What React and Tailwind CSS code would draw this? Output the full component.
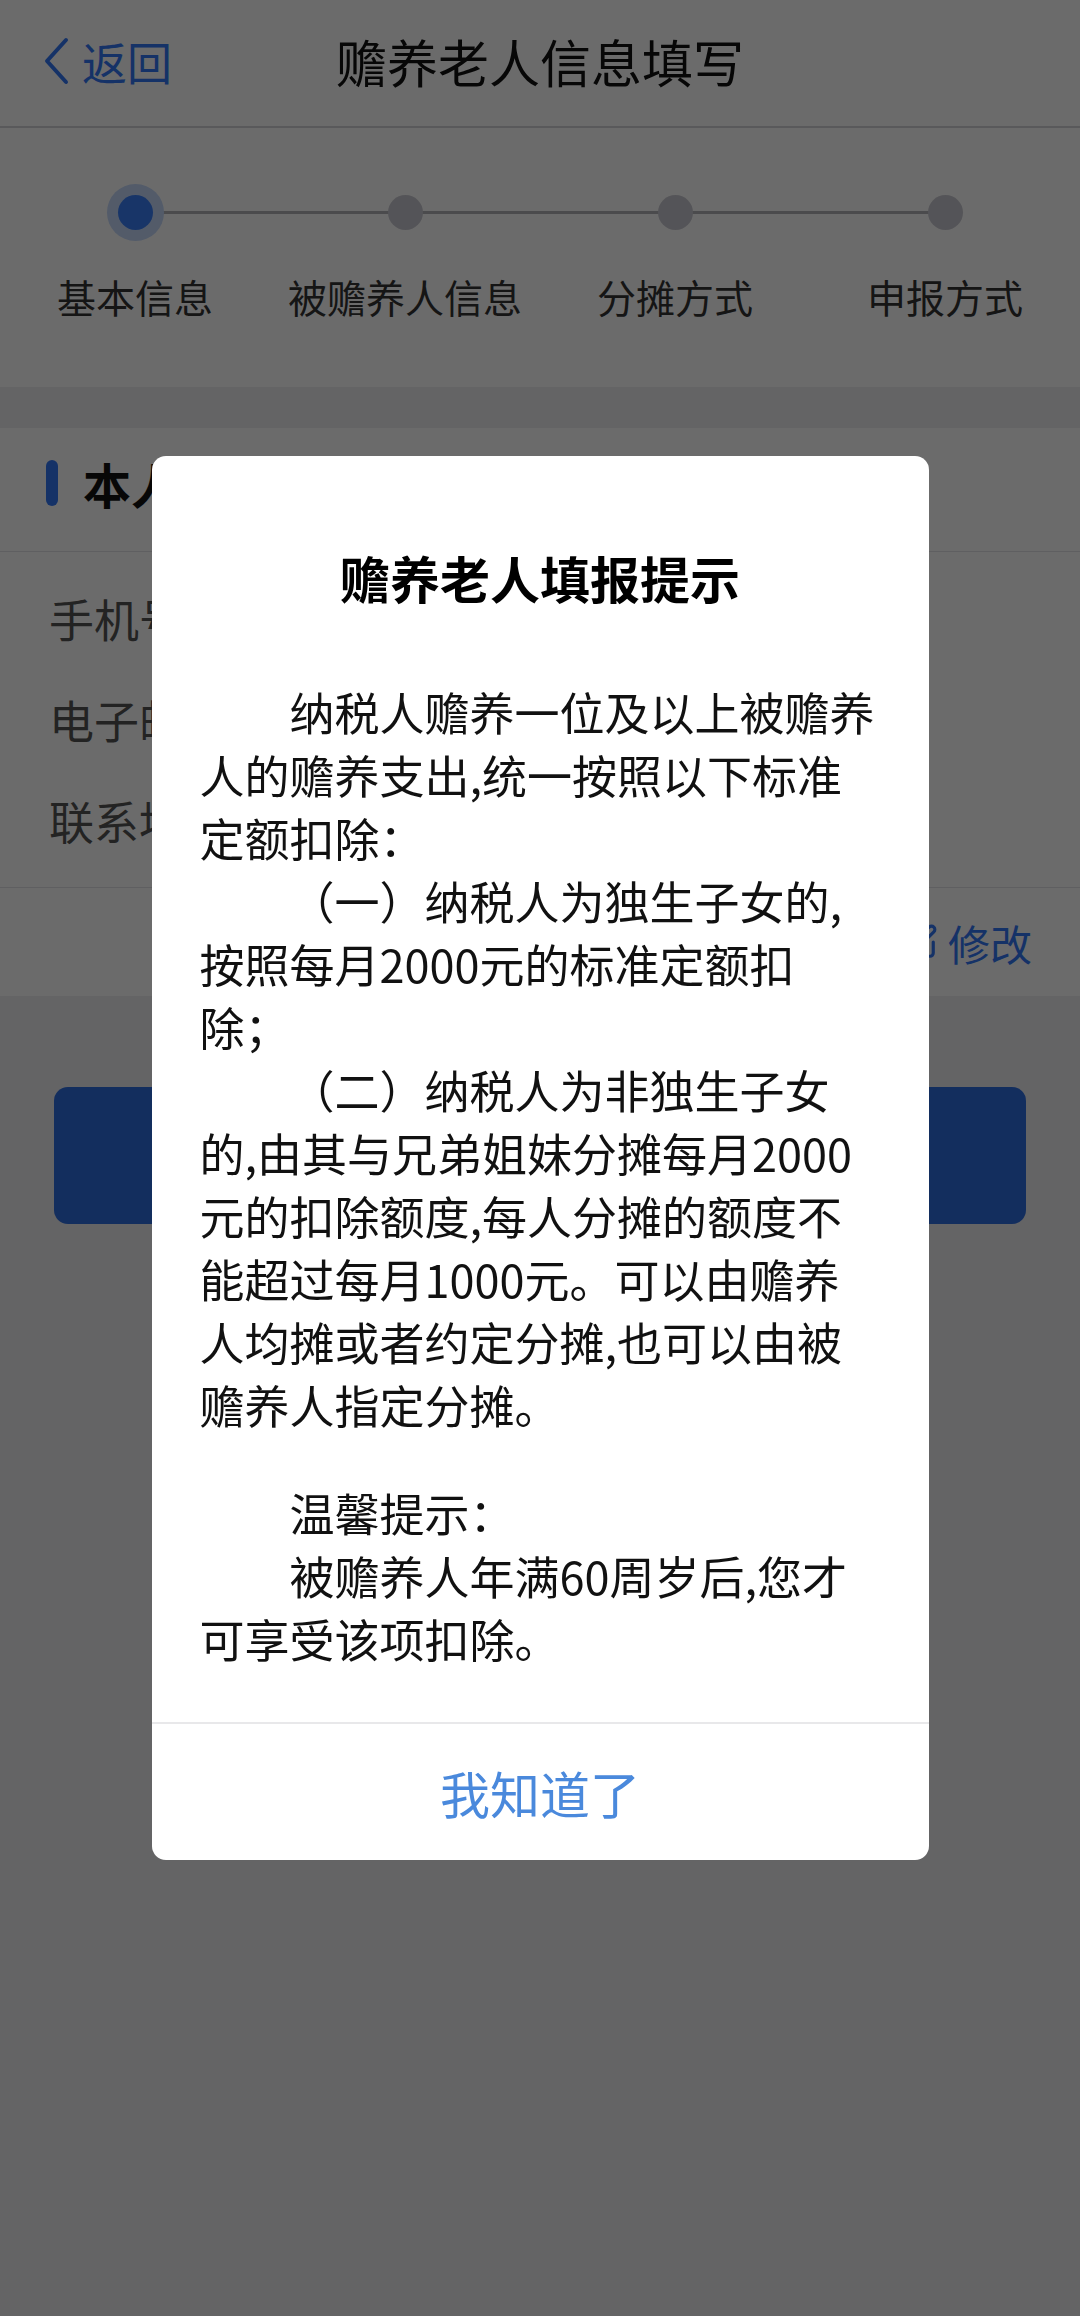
import { SquarePen } from 'lucide-react'

const STEPS = ['基本信息', '被赡养人信息', '分摊方式', '申报方式']
const FIELDS = ['手机号码', '电子邮箱', '联系地址']

const font = "font-['Noto_Sans_CJK_SC',sans-serif]"

function Header() {
  return (
    <header className="grid h-[128px] grid-cols-[1fr_auto_1fr] items-center border-b-2 border-[#d4d4d8] bg-white pb-[4px]">
      <button className="flex items-center gap-[12px] pl-[42px] text-[45px] leading-none text-[#3478f6]">
        <svg width="28" height="48" viewBox="0 0 28 48" fill="none">
          <polyline points="24,3 5,24 24,45" stroke="#3478f6" strokeWidth="4" strokeLinecap="round" strokeLinejoin="round" />
        </svg>
        返回
      </button>
      <h1 className="text-[51px] leading-none text-[#111]">赡养老人信息填写</h1>
      <div />
    </header>
  )
}

function Steps() {
  return (
    <div className="grid h-[259px] grid-cols-4 bg-white pt-[56px]">
      {STEPS.map((label, i) => (
        <div key={label} className="relative flex flex-col items-center">
          {i < STEPS.length - 1 && (
            <div className="absolute left-1/2 top-[27px] h-[3px] w-full bg-[#b4b4b8]" />
          )}
          <div className="relative flex h-[57px] w-[57px] items-center justify-center">
            {i === 0 ? (
              <span className="flex h-[57px] w-[57px] items-center justify-center rounded-full bg-[#c5d9fb]">
                <span className="h-[35px] w-[35px] rounded-full bg-[#3a7ff8]" />
              </span>
            ) : (
              <span className="h-[35px] w-[35px] rounded-full bg-[#c9c9d1]" />
            )}
          </div>
          <span className="mt-[32px] text-[39px] leading-[47px] text-[#333]">{label}</span>
        </div>
      ))}
    </div>
  )
}

function InfoCard() {
  return (
    <section className="mt-[41px] bg-white">
      <div className="flex h-[124px] items-center gap-[25px] border-b border-[#e3e3e6] pb-[14px] pl-[46px]">
        <span className="h-[46px] w-[12px] rounded-full bg-[#3478f6]" />
        <h2 className="text-[48px] font-bold leading-none text-[#111]">本人信息</h2>
      </div>
      <div className="border-b border-[#e3e3e6] py-[16px]">
        {FIELDS.map((f) => (
          <div key={f} className="flex h-[101px] items-center pl-[49px] text-[45px] text-[#555]">
            {f}
          </div>
        ))}
      </div>
      <div className="flex h-[108px] items-center justify-end gap-[10px] pr-[48px] text-[42px] text-[#3478f6]">
        <SquarePen size={38} strokeWidth={2} />
        修改
      </div>
    </section>
  )
}

function NoticeDialog() {
  return (
    <div className="fixed inset-0 flex items-center justify-center bg-black/[0.58]">
      <div className="w-[777px] overflow-hidden rounded-[14px] bg-white">
        <div className="px-[48px] pb-[52px] pt-[88px]">
          <h3 className="text-center text-[50px] font-bold leading-[66px] text-black">赡养老人填报提示</h3>
          <div className="mt-[70px] text-[45px] leading-[63px] text-[#111]">
            <p className="indent-[2em]">纳税人赡养一位及以上被赡养人的赡养支出,统一按照以下标准定额扣除：</p>
            <p className="indent-[2em]">（一）纳税人为独生子女的,按照每月2000元的标准定额扣除；</p>
            <p className="indent-[2em]">
              （二）纳税人为非独生子女的,由其与兄弟姐妹分摊每月2000元的扣除额度,每人分摊的额度不能超过每月1000元。可以由赡养人均摊或者约定分摊,也可以由被赡养人指定分摊。
            </p>
            <p className="mt-[45px] indent-[2em]">温馨提示：</p>
            <p className="indent-[2em]">被赡养人年满60周岁后,您才可享受该项扣除。</p>
          </div>
        </div>
        <button className="flex h-[138px] w-full items-center justify-center border-t-2 border-[#e8e8ea] text-[50px] leading-none text-[#4a89dc]">
          我知道了
        </button>
      </div>
    </div>
  )
}

export default function App() {
  return (
    <div className={`${font} relative h-[2316px] w-full overflow-hidden bg-[#eeeef1]`}>
      <Header />
      <Steps />
      <InfoCard />
      <div className="mx-[54px] mt-[91px] flex h-[137px] items-center justify-center rounded-[14px] bg-[#2f6ee0] text-[51px] text-white">
        下一步
      </div>
      <NoticeDialog />
    </div>
  )
}
